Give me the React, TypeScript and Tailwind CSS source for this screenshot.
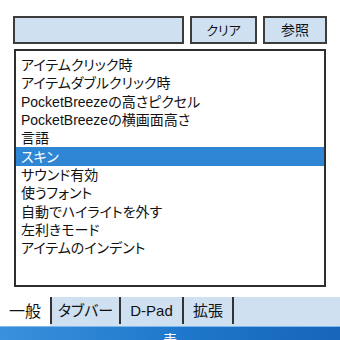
const ITEMS = [
  'アイテムクリック時',
  'アイテムダブルクリック時',
  'PocketBreezeの高さピクセル',
  'PocketBreezeの横画面高さ',
  '言語',
  'スキン',
  'サウンド有効',
  '使うフォント',
  '自動でハイライトを外す',
  '左利きモード',
  'アイテムのインデント',
];

const TABS = [
  { label: 'タブバー', w: 'w-[69px]' },
  { label: 'D-Pad', w: 'w-[63px]' },
  { label: '拡張', w: 'w-[50px]' },
];

const SELECTED = 5;

export default function App() {
  return (
    <div
      className="w-[340px] h-[340px] overflow-hidden bg-white flex flex-col text-[#111]"
      style={{ fontFamily: '"Liberation Sans", "Noto Sans CJK JP", sans-serif', fontFeatureSettings: '"palt"' }}
    >
      {/* 検索欄 + ボタン */}
      <div className="shrink-0 flex gap-[6px] pl-[13px] pt-[16px]">
        <div className="w-[171px] h-[28px] bg-[#cfe0f1] border-2 border-[#3c3c3c]" />
        <button className="w-[67px] h-[28px] bg-[#cfe0f1] border-2 border-[#3c3c3c] text-[13px] leading-none">
          クリア
        </button>
        <button className="w-[64px] h-[28px] bg-[#cfe0f1] border-2 border-[#3c3c3c] text-[14px] leading-none">
          参照
        </button>
      </div>

      {/* リスト */}
      <div className="shrink-0 mt-[5px] ml-[14px] w-[312px] h-[238px] border-2 border-[#2e2e2e] pt-[5px]">
        {ITEMS.map((item, i) => (
          <div
            key={i}
            className={
              i === SELECTED
                ? 'h-[18.3px] flex items-center pl-[5px] text-[14px] leading-none bg-[#2f86d4] text-white'
                : 'h-[18.3px] flex items-center pl-[5px] text-[14px] leading-none'
            }
          >
            {item}
          </div>
        ))}
      </div>

      {/* タブ */}
      <div className="shrink-0 mt-[10px] h-[29px] flex bg-[#cfe0f1]">
        <div className="w-[50px] h-full bg-white flex items-center justify-center text-[16px] leading-none">
          一般
        </div>
        {TABS.map((t) => (
          <div
            key={t.label}
            className={`${t.w} h-[27px] border-l-2 border-[#333] flex items-center justify-center text-[15px] leading-none`}
          >
            {t.label}
          </div>
        ))}
        <div className="h-[27px] border-l-2 border-[#333]" />
      </div>

      {/* 下部バー */}
      <div className="shrink-0 h-[30px] bg-gradient-to-r from-[#3a92dc] via-[#1f79cc] to-[#1765ba] border-t border-[#7fb8ea] flex justify-center pt-[6px] text-white text-[14px] leading-none">
        表
      </div>
    </div>
  );
}
